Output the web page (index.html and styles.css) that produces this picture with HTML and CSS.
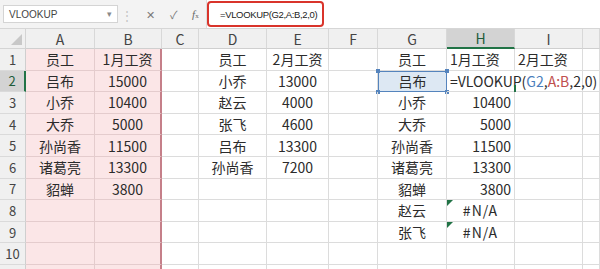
FILE: index.html
```html
<!DOCTYPE html>
<html lang="zh-CN">
<head>
    <meta charset="UTF-8">
    <title>VLOOKUP</title>
    <link rel="stylesheet" href="styles.css">
</head>
<body>
    <div class="toolbar">
        <div class="namebox">
            <span>VLOOKUP</span>
            <span class="caret">▾</span>
        </div>
        <div class="dots">⋮</div>
        <div class="fx-buttons">
            <span class="btn">✕</span>
            <span class="btn">✓</span>
            <span class="btn fx"><i>f</i><small>x</small></span>
        </div>
        <div class="formula">
            <span class="formula-text">=VLOOKUP(G2,A:B,2,0)</span>
        </div>
    </div>

    <div class="sheet">
        <!-- header row -->
        <div class="corner"></div>
        <div class="colhead">A</div>
        <div class="colhead">B</div>
        <div class="colhead">C</div>
        <div class="colhead">D</div>
        <div class="colhead">E</div>
        <div class="colhead">F</div>
        <div class="colhead">G</div>
        <div class="colhead active">H</div>
        <div class="colhead">I</div>
        <div class="colhead"></div>

        <!-- row 1 -->
        <div class="rowhead">1</div>
        <div class="cell pink">员工</div>
        <div class="cell pink edge">1月工资</div>
        <div class="cell"></div>
        <div class="cell">员工</div>
        <div class="cell">2月工资</div>
        <div class="cell"></div>
        <div class="cell">员工</div>
        <div class="cell left">1月工资</div>
        <div class="cell left">2月工资</div>
        <div class="cell"></div>

        <!-- row 2 -->
        <div class="rowhead active">2</div>
        <div class="cell pink">吕布</div>
        <div class="cell pink edge">15000</div>
        <div class="cell"></div>
        <div class="cell">小乔</div>
        <div class="cell">13000</div>
        <div class="cell"></div>
        <div class="cell ref">吕布<b class="h tl"></b><b class="h tr"></b><b class="h bl"></b><b class="h br"></b></div>
        <div class="cell editing"><span class="edit-text">=VLOOKUP(<span class="blue">G2</span>,<span class="red">A:B</span>,2,0)</span></div>
        <div class="cell no-left"></div>
        <div class="cell"></div>

        <!-- row 3 -->
        <div class="rowhead">3</div>
        <div class="cell pink">小乔</div>
        <div class="cell pink edge">10400</div>
        <div class="cell"></div>
        <div class="cell">赵云</div>
        <div class="cell">4000</div>
        <div class="cell"></div>
        <div class="cell">小乔</div>
        <div class="cell right">10400</div>
        <div class="cell"></div>
        <div class="cell"></div>

        <!-- row 4 -->
        <div class="rowhead">4</div>
        <div class="cell pink">大乔</div>
        <div class="cell pink edge">5000</div>
        <div class="cell"></div>
        <div class="cell">张飞</div>
        <div class="cell">4600</div>
        <div class="cell"></div>
        <div class="cell">大乔</div>
        <div class="cell right">5000</div>
        <div class="cell"></div>
        <div class="cell"></div>

        <!-- row 5 -->
        <div class="rowhead">5</div>
        <div class="cell pink">孙尚香</div>
        <div class="cell pink edge">11500</div>
        <div class="cell"></div>
        <div class="cell">吕布</div>
        <div class="cell">13300</div>
        <div class="cell"></div>
        <div class="cell">孙尚香</div>
        <div class="cell right">11500</div>
        <div class="cell"></div>
        <div class="cell"></div>

        <!-- row 6 -->
        <div class="rowhead">6</div>
        <div class="cell pink">诸葛亮</div>
        <div class="cell pink edge">13300</div>
        <div class="cell"></div>
        <div class="cell">孙尚香</div>
        <div class="cell">7200</div>
        <div class="cell"></div>
        <div class="cell">诸葛亮</div>
        <div class="cell right">13300</div>
        <div class="cell"></div>
        <div class="cell"></div>

        <!-- row 7 -->
        <div class="rowhead">7</div>
        <div class="cell pink">貂蝉</div>
        <div class="cell pink edge">3800</div>
        <div class="cell"></div>
        <div class="cell"></div>
        <div class="cell"></div>
        <div class="cell"></div>
        <div class="cell">貂蝉</div>
        <div class="cell right">3800</div>
        <div class="cell"></div>
        <div class="cell"></div>

        <!-- row 8 -->
        <div class="rowhead">8</div>
        <div class="cell pink"></div>
        <div class="cell pink edge"></div>
        <div class="cell"></div>
        <div class="cell"></div>
        <div class="cell"></div>
        <div class="cell"></div>
        <div class="cell">赵云</div>
        <div class="cell error">#N/A</div>
        <div class="cell"></div>
        <div class="cell"></div>

        <!-- row 9 -->
        <div class="rowhead">9</div>
        <div class="cell pink"></div>
        <div class="cell pink edge"></div>
        <div class="cell"></div>
        <div class="cell"></div>
        <div class="cell"></div>
        <div class="cell"></div>
        <div class="cell">张飞</div>
        <div class="cell error">#N/A</div>
        <div class="cell"></div>
        <div class="cell"></div>

        <!-- row 10 -->
        <div class="rowhead">10</div>
        <div class="cell pink"></div>
        <div class="cell pink edge"></div>
        <div class="cell"></div>
        <div class="cell"></div>
        <div class="cell"></div>
        <div class="cell"></div>
        <div class="cell"></div>
        <div class="cell"></div>
        <div class="cell"></div>
        <div class="cell"></div>

        <!-- row 11 -->
        <div class="rowhead"></div>
        <div class="cell pink"></div>
        <div class="cell pink edge"></div>
        <div class="cell"></div>
        <div class="cell"></div>
        <div class="cell"></div>
        <div class="cell"></div>
        <div class="cell"></div>
        <div class="cell"></div>
        <div class="cell"></div>
        <div class="cell"></div>
    </div>
</body>
</html>
```

FILE: styles.css
```css
body {
    margin: 0;
    width: 600px;
    height: 269px;
    overflow: hidden;
    background: #ffffff;
    font-family: "Noto Sans CJK SC", "Noto Sans", sans-serif;
    color: #333333;
}
.toolbar {
    height: 29px;
    box-sizing: border-box;
    background: #f3f3f3;
    border-bottom: 1px solid #d6d6d6;
    display: flex;
    align-items: center;
}
.namebox {
    margin-left: 3px;
    width: 115px;
    height: 18px;
    box-sizing: border-box;
    background: #ffffff;
    border: 1px solid #d4d4d4;
    display: flex;
    align-items: center;
    justify-content: space-between;
    padding: 0 5px 0 5px;
    font-family: "Liberation Sans", Arial, sans-serif;
    font-size: 10px;
    color: #444444;
}
.caret {
    color: #8a8a8a;
    font-size: 9px;
}
.dots {
    width: 18px;
    text-align: center;
    color: #c4c4c4;
    font-size: 12px;
}
.fx-buttons {
    width: 67px;
    height: 29px;
    display: flex;
    align-items: center;
    justify-content: space-around;
    padding-left: 3px;
    color: #7a7a7a;
    font-size: 11px;
}
.fx {
    font-family: "Liberation Serif", serif;
    font-size: 11px;
    color: #666666;
}
.fx small {
    font-size: 7px;
}
.formula {
    flex: 1;
    height: 28px;
    background: #ffffff;
    border-left: 1px solid #dddddd;
    display: flex;
    align-items: center;
}
.formula-text {
    height: 26px;
    box-sizing: border-box;
    width: 117px;
    display: flex;
    align-items: center;
    padding-left: 11px;
    border: 2px solid #d9342b;
    border-radius: 4px;
    font-family: "Liberation Sans", Arial, sans-serif;
    font-size: 9.5px;
    letter-spacing: -0.35px;
    color: #222222;
}
.sheet {
    display: grid;
    grid-template-columns: 26px 69px 67px 37px 68px 62px 49px 69px 68px 68px 17px;
    grid-template-rows: 20px repeat(11, 21.6px);
    height: 240px;
    overflow: hidden;
    font-size: 14px;
}
.corner {
    background: #f0f0f0;
    border-right: 1px solid #d4d4d4;
    border-bottom: 1px solid #d4d4d4;
    position: relative;
}
.corner::after {
    content: "";
    position: absolute;
    right: 3px;
    bottom: 3px;
    border-left: 11px solid transparent;
    border-bottom: 11px solid #c8c8c8;
}
.colhead {
    background: #f0f0f0;
    border-right: 1px solid #d8d8d8;
    border-bottom: 1px solid #cfcfcf;
    display: flex;
    align-items: center;
    justify-content: center;
    color: #444444;
    font-size: 14px;
    box-sizing: border-box;
}
.colhead.active {
    background: #d3d3d3;
    border-bottom: 2px solid #217346;
    color: #1e5c3a;
}
.rowhead {
    background: #f0f0f0;
    border-right: 1px solid #cfcfcf;
    border-bottom: 1px solid #dadada;
    display: flex;
    align-items: center;
    justify-content: center;
    color: #444444;
    font-size: 13px;
    box-sizing: border-box;
}
.rowhead.active {
    background: #d3d3d3;
    border-right: 2px solid #217346;
    color: #1e5c3a;
}
.cell {
    border-right: 1px solid #dcdcdc;
    border-bottom: 1px solid #dcdcdc;
    display: flex;
    align-items: center;
    justify-content: center;
    white-space: nowrap;
    box-sizing: border-box;
    position: relative;
    color: #2b2b2b;
}
.cell.pink {
    background: #fbe6e7;
    border-right-color: #e4cccd;
    border-bottom-color: #e4cccd;
}
.cell.edge {
    border-right: 2px solid #c57f89;
}
.cell.left {
    justify-content: flex-start;
    padding-left: 3px;
}
.cell.right {
    justify-content: flex-end;
    padding-right: 3px;
}
.cell.ref {
    background: #dde8f3;
    border: 1px solid #5584bd;
}
.h {
    position: absolute;
    width: 4px;
    height: 4px;
    background: #5584bd;
}
.tl { left: -3px; top: -3px; }
.tr { right: -3px; top: -3px; }
.bl { left: -3px; bottom: -3px; }
.br { right: -3px; bottom: -3px; }
.cell.editing {
    justify-content: flex-start;
    overflow: visible;
    border-right: none;
    z-index: 1;
}
.cell.editing::after {
    content: "";
    position: absolute;
    right: -1px;
    bottom: -1px;
    width: 2px;
    height: 7px;
    background: #217346;
}
.edit-text {
    padding-left: 3px;
    color: #2b2b2b;
}
.blue {
    color: #4a7ebb;
}
.red {
    color: #c0504d;
}
.cell.error {
    letter-spacing: 1px;
}
.cell.error::before {
    content: "";
    position: absolute;
    left: 0;
    top: 0;
    border-top: 6px solid #217346;
    border-right: 6px solid transparent;
}
```
